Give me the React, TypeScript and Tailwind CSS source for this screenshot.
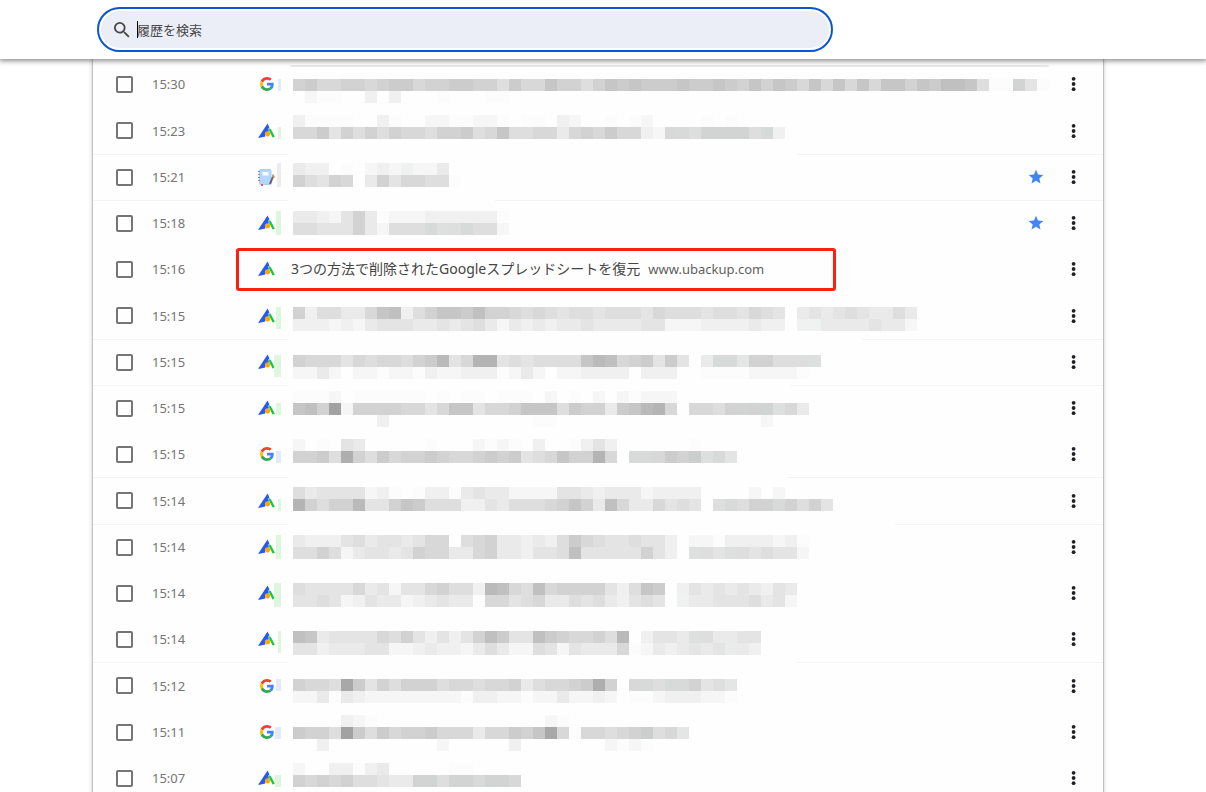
import React from 'react';

type Site = 'google' | 'ubackup' | 'notebook';

interface HistoryEntry {
  time: string;
  site: Site;
  title?: string;
  domain?: string;
  starred?: boolean;
  // Redacted entries: first line offset inside the row, and one string per line of cells
  y?: number;
  lines?: string[];
  tint?: [number, number, number]; // x, y, height of the coloured cell beside the favicon
  rule?: number; // where the divider above the row starts again after the redaction
}

const CELL = 12;
const MOSAIC_LEFT = 17;

const entries: HistoryEntry[] = [
  {
    time: '15:30', site: 'google', y: 18, tint: [2, 18, 12],
    lines: [
      'higghhghiighhiihhfiggjhhfhjijiiijiijihjhjigjgjgjgjjhjikkjfaaHea',
      '.baa..c.c...a...aa',
    ],
  },
  {
    time: '15:23', site: 'ubackup', y: 8, tint: [2, 20, 12],
    lines: [
      'caaaa..ca..bbaabba.aa.cb..a.ab....a.a',
      'ggiehfhfhggfhhifgjffggdghgiggcbgGfHHHHfGc',
    ],
  },
  {
    time: '15:21', site: 'notebook', starred: true, y: 9, tint: [1, 9, 24], rule: 797,
    lines: ['dcc.a.bcbCbbd', 'hfehg.dheggffa'],
  },
  {
    time: '15:18', site: 'ubackup', starred: true, y: 11, tint: [0, 11, 24], rule: 495,
    lines: ['ddcbehdabbbcccccca', 'ffeeehdbfffGFfGffb'],
  },
  {
    time: '15:16',
    site: 'ubackup',
    title: '3つの方法で削除されたGoogleスプレッドシートを復元',
    domain: 'www.ubackup.com',
  },
  {
    time: '15:15', site: 'ubackup', y: 15, tint: [0, 15, 22],
    lines: [
      'hcffddgjkcfhjjikhhgfgfeffefffegfffeffegfe.dedefeddfd',
      'cccbcbdeeeddedefdbdcdcddeddddeebbbccccdcc.CCddddeddb',
    ],
  },
  {
    time: '15:15', site: 'ubackup', y: 16, tint: [-2, 16, 22], rule: 862,
    lines: [
      'hgggegfggfhilegmmefeffffjlkghieie.dGGEhhfffF',
      'bbdb.bbabbacbbcccabdb.bbcccc.ccc..aaaabbbba',
    ],
  },
  {
    time: '15:15', site: 'ubackup', y: 6, tint: [0, 18, 12], rule: 790,
    lines: [
      'aaab.aaaaaa.a.aa.aaa.b.a.b.babbb',
      'jkhpbhhhhggegjjegghjjjfihhdijlmg.ggfhHhHFgd',
      '.......c............aa.................b',
    ],
  },
  {
    time: '15:15', site: 'google', y: 8, tint: [0, 20, 12],
    lines: [
      'b.a.ed.....a...baba.c..acec......a',
      'hhifnhfighhihgghihiefgjhhmg.GGgihIFGe',
    ],
  },
  {
    time: '15:14', site: 'ubackup', y: 10, tint: [2, 22, 12], rule: 787,
    lines: [
      'fdeeeebca.accadeddbbbbeedcdddbcccc....b.b',
      'mhfhhleehjifffccedfffghjhdkgddgefe.fGfhhGhfhe',
    ],
  },
  {
    time: '15:14', site: 'ubackup', y: 11, tint: [0, 11, 24], rule: 895,
    lines: [
      'dcccefdeedegg.fghddcdcfigfeefeec.bbaccccbca',
      'ffhfbdeedehggddghddceefkeeeeehec.FfeFfefeeb',
    ],
  },
  {
    time: '15:14', site: 'ubackup', y: 13, tint: [-2, 13, 24],
    lines: [
      'feeeegdebeeghffclkgfkghhhhecfji.cedededced',
      'eefebceddbcdeddaggefgddfefdcefe.Cddeeefdeb',
    ],
  },
  {
    time: '15:14', site: 'ubackup', y: 15, tint: [2, 15, 22],
    lines: [
      'kjdeeeegfhececehkieekihgghfl.ceedFfddee',
      'eecdddeebbcdccbdfdbbfebedddgabdcdedeDdc',
    ],
  },
  {
    time: '15:12', site: 'google', y: 17, tint: [0, 17, 12], rule: 796,
    lines: [
      'hggfoiehfhhhfggfgghdfgghinh.gGfGGhefE',
      'bbdadcbbbbbbbbaccbbabbdbbcb.aabcccbba',
    ],
  },
  {
    time: '15:11', site: 'google', y: 6, tint: [-1, 18, 12],
    lines: [
      '....cba..............ba',
      'ihhfpifighhigggdggihjogaggfghIfgE',
      '..c.........b.....c.......baba',
    ],
  },
  {
    time: '15:07', site: 'ubackup', y: 8, tint: [-1, 20, 12],
    lines: ['b..ccacd.....aa', 'hghghffeddHHfHHGHHg'],
  },
];

// 'a' is almost white, each later letter is a step darker; capitals lean green
const cellColor = (code: string) => {
  const level = 252 - (code.toLowerCase().charCodeAt(0) - 97) * 6;
  return code === code.toLowerCase()
    ? `rgb(${level},${level},${level})`
    : `rgb(${level - 1},${level + 2},${level + 1})`;
};

const Mosaic: React.FC<{ entry: HistoryEntry }> = ({ entry }) => {
  const { lines = [], y = 0, tint, site } = entry;
  const tintColor = site === 'google' ? '#e3eaf9' : site === 'ubackup' ? '#def6de' : '#eeebf0';
  return (
    <svg className="block h-[46px] w-full overflow-visible" shapeRendering="crispEdges" role="img" aria-label="非表示の項目">
      {tint && <rect x={tint[0]} y={tint[1]} width={5 - tint[0]} height={tint[2]} fill={tintColor} />}
      {lines.map((line, row) =>
        line.split('').map((code, col) =>
          code === '.' ? null : (
            <rect
              key={`${row}-${col}`}
              x={MOSAIC_LEFT + col * CELL}
              y={y + row * CELL}
              width={CELL}
              height={CELL}
              fill={cellColor(code)}
            />
          )
        )
      )}
    </svg>
  );
};

const GoogleIcon = () => (
  <svg viewBox="0 0 48 48" className="h-[14px] w-[14px]" aria-hidden="true">
    <path fill="#EA4335" d="M24 9.5c3.54 0 6.71 1.22 9.21 3.6l6.85-6.85C35.9 2.38 30.47 0 24 0 14.62 0 6.51 5.38 2.56 13.22l7.98 6.19C12.43 13.72 17.74 9.5 24 9.5z" />
    <path fill="#4285F4" d="M46.98 24.55c0-1.57-.15-3.09-.38-4.55H24v9.02h12.94c-.58 2.96-2.26 5.48-4.78 7.18l7.73 6c4.51-4.18 7.09-10.36 7.09-17.65z" />
    <path fill="#FBBC05" d="M10.53 28.59c-.48-1.45-.76-2.99-.76-4.59s.27-3.14.76-4.59l-7.98-6.19C.92 16.46 0 20.12 0 24c0 3.88.92 7.54 2.56 10.78l7.97-6.19z" />
    <path fill="#34A853" d="M24 48c6.48 0 11.93-2.13 15.89-5.81l-7.73-6c-2.15 1.45-4.92 2.3-8.16 2.3-6.26 0-11.57-4.22-13.47-9.91l-7.98 6.19C6.51 42.62 14.62 48 24 48z" />
  </svg>
);

const UbackupIcon = () => (
  <svg viewBox="0 0 18 16" className="h-4 w-[18px]" aria-hidden="true">
    <path fill="#2558f5" d="M9.6 0.6L11.4 4.4L10.4 5.4L10.8 8.2L7 12L7.4 13.4L0 15Z" />
    <path fill="#12c93a" d="M11 5.2L12.8 6L16.8 13.8L14.6 14.4L11.2 8Z" />
    <circle cx="9.5" cy="10.8" r="2.6" fill="#fba90a" />
  </svg>
);

const NotebookIcon = () => (
  <svg viewBox="0 0 18 18" className="h-[18px] w-[18px]" aria-hidden="true">
    <rect x="1.5" y="1.5" width="11.5" height="15" rx="1" fill="#b5d6fb" stroke="#a9cdf5" />
    <rect x="4.5" y="4" width="6" height="3.5" fill="#f6fbff" />
    <path d="M0 3.5h2M0 6.5h2M0 9.5h2M0 12.5h2" stroke="#8291a5" />
    <path d="M12 16L15 8.5" stroke="#60616b" strokeWidth="2" />
    <path d="M14.4 6.5L16.4 9.5" stroke="#e6813c" strokeWidth="1.4" />
    <path d="M3 17h2" stroke="#e85d68" strokeWidth="2" />
  </svg>
);

const Favicon: React.FC<{ site: Site }> = ({ site }) => {
  if (site === 'google') return <GoogleIcon />;
  if (site === 'notebook') return <NotebookIcon />;
  return <UbackupIcon />;
};

const HistoryRow: React.FC<{ entry: HistoryEntry; id: string }> = ({ entry, id }) => (
  <li className="relative flex h-[46px] items-center pl-[23px] pr-[17px] nth-[4n+2]:h-[47px]">
    {entry.rule && (
      <svg className="absolute inset-x-0 top-0 h-px w-full" shapeRendering="crispEdges" aria-hidden="true">
        <rect width="195" height="1" fill="#f4f4f4" />
        <rect x={entry.rule - 93} width="100%" height="1" fill="#f4f4f4" />
      </svg>
    )}
    <input
      id={id}
      type="checkbox"
      className="h-[17px] w-[17px] shrink-0 appearance-none rounded-[2px] border-2 border-[#757575] checked:bg-[#0b57d0]"
    />
    <label htmlFor={id} className="ml-[19px] w-[106px] shrink-0 text-[13px] leading-5 text-[#757575]">
      {entry.time}
    </label>
    <span className="flex w-[18px] shrink-0 justify-center">
      <Favicon site={entry.site} />
    </span>
    {entry.title ? (
      <div className="flex min-w-0 flex-1 items-center gap-2 pl-[15px] leading-5 whitespace-nowrap">
        <a href="#" className="text-sm leading-5 text-[#444]">{entry.title}</a>
        <span className="text-[13px] text-[#5f5f5f]">{entry.domain}</span>
      </div>
    ) : (
      <div className="min-w-0 flex-1 self-start">
        <Mosaic entry={entry} />
      </div>
    )}
    {entry.starred && (
      <button type="button" aria-label="ブックマーク" className="mr-[18px] shrink-0">
        <svg viewBox="1 1 22 22" className="h-4 w-4" fill="#4285f4">
          <path d="M12 17.27L18.18 21l-1.64-7.03L22 9.24l-7.19-.61L12 2 9.19 8.63 2 9.24l5.46 4.73L5.82 21z" />
        </svg>
      </button>
    )}
    <button type="button" aria-label="その他の操作" className="flex h-6 w-6 shrink-0 items-center justify-center">
      <svg viewBox="0 0 6 16" className="h-4 w-1.5" fill="#202124">
        <circle cx="2.6" cy="2.8" r="1.9" />
        <circle cx="2.6" cy="8" r="1.9" />
        <circle cx="2.6" cy="13.2" r="1.9" />
      </svg>
    </button>
    {entry.title && (
      <div className="pointer-events-none absolute top-[2px] bottom-px left-[143px] w-[600px] rounded-[3px] border-3 border-[#ff1e12]" />
    )}
  </li>
);

const SearchBar = () => (
  <header className="relative z-10 h-[59px] bg-white pt-[7px] pr-[10px] shadow-[0_1px_5px_1px_rgba(0,0,0,0.45)]">
    <div className="mx-auto max-w-[1010px] px-1">
      <label className="flex h-[45px] max-w-[736px] items-center rounded-full border-2 border-[#0b57d0] bg-[#ebeef7] pl-[15px] ring-2 ring-white ring-inset">
        <svg viewBox="3 3 18 18" className="h-4 w-4 shrink-0" fill="#474747" aria-hidden="true">
          <path d="M15.5 14h-.79l-.28-.27A6.471 6.471 0 0 0 16 9.5 6.5 6.5 0 1 0 9.5 16c1.61 0 3.09-.59 4.23-1.57l.27.28v.79l5 4.99L20.49 19l-4.99-5zm-6 0C7.01 14 5 11.99 5 9.5S7.01 5 9.5 5 14 7.01 14 9.5 11.99 14 9.5 14z" />
        </svg>
        <span className="-mr-px ml-[7px] h-[17px] w-px bg-black" />
        <input
          type="text"
          aria-label="履歴を検索"
          placeholder="履歴を検索"
          className="min-w-0 flex-1 bg-transparent text-[13px] leading-5 outline-none placeholder:text-[#474747]"
        />
      </label>
    </div>
  </header>
);

const App: React.FC = () => {
  return (
    <div className="h-screen overflow-hidden bg-white font-['Noto_Sans','Noto_Sans_CJK_JP',sans-serif]">
      <SearchBar />
      <main className="pr-[10px]">
        <div className="mx-auto max-w-[1010px] bg-[#fefefe] pt-[2px] shadow-[0_0_0_1px_rgba(0,0,0,0.14),0_1px_4px_1px_rgba(0,0,0,0.2)]">
          <div className="relative">
            <div className="absolute top-[4px] left-[197px] right-[54px] h-[2px] rounded-t-full bg-[#e8e8e8]" />
          </div>
          <ul>
            {entries.map((entry, index) => (
              <HistoryRow key={index} id={`entry-${index}`} entry={entry} />
            ))}
          </ul>
        </div>
      </main>
    </div>
  );
};

export default App;
